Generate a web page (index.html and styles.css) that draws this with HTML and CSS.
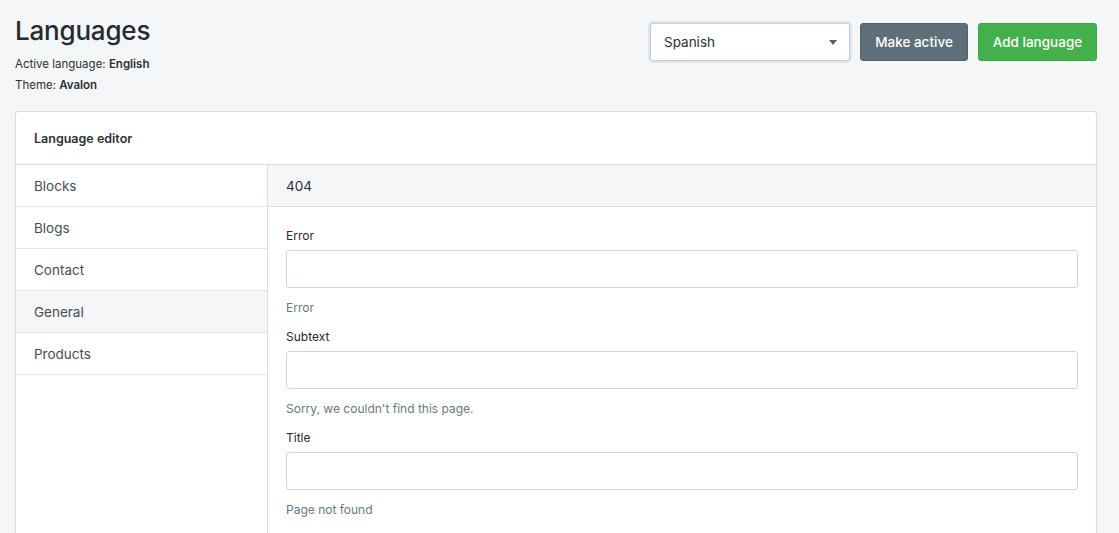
FILE: index.html
```html
<!DOCTYPE html>
<html>
<head>
<meta charset="utf-8">
<link rel="stylesheet" href="styles.css">
</head>
<body>
<div class="page">
  <header class="top">
    <div class="titles">
      <h1>Languages</h1>
      <p class="meta">Active language: <strong>English</strong></p>
      <p class="meta">Theme: <strong>Avalon</strong></p>
    </div>
    <div class="actions">
      <div class="select">
        <span>Spanish</span>
        <svg class="caret" width="8" height="5" viewBox="0 0 8 5"><path d="M0 0h8L4 5z" fill="#5a6068"/></svg>
      </div>
      <button class="btn btn-gray">Make active</button>
      <button class="btn btn-green">Add language</button>
    </div>
  </header>

  <section class="card">
    <div class="card-head">Language editor</div>
    <div class="card-body">
      <nav class="side">
        <div class="side-item">Blocks</div>
        <div class="side-item">Blogs</div>
        <div class="side-item">Contact</div>
        <div class="side-item active">General</div>
        <div class="side-item">Products</div>
      </nav>
      <div class="panel">
        <div class="panel-head">404</div>
        <div class="panel-body">
          <div class="group">
            <label>Error</label>
            <div class="input"></div>
            <div class="help">Error</div>
          </div>
          <div class="group">
            <label>Subtext</label>
            <div class="input"></div>
            <div class="help">Sorry, we couldn't find this page.</div>
          </div>
          <div class="group">
            <label>Title</label>
            <div class="input"></div>
            <div class="help">Page not found</div>
          </div>
        </div>
      </div>
    </div>
  </section>
</div>
</body>
</html>
```

FILE: styles.css
```css
* { box-sizing: border-box; }
html, body {
  margin: 0;
  background: #f5f6f8;
  font-family: Inter, "Open Sans", Arial, sans-serif;
  color: #2c3038;
  overflow: hidden;
}
.page {
  padding: 13px 22px 0 15px;
}
.top {
  display: flex;
  justify-content: space-between;
  align-items: flex-start;
}
.titles h1 {
  margin: 0 0 5px 0;
  font-size: 26px;
  line-height: 36px;
  font-weight: 500;
  letter-spacing: -0.2px;
  color: #262a31;
}
.meta {
  margin: 0;
  font-size: 11.5px;
  line-height: 21px;
  color: #2c3038;
}
.meta strong { font-weight: 600; }
.actions {
  display: flex;
  gap: 10px;
  margin-top: 10px;
}
.select {
  width: 200px;
  height: 38px;
  background: #fff;
  border: 1px solid #c2ccd4;
  border-radius: 3px;
  box-shadow: 0 0 0 2px #dfe5ea;
  display: flex;
  align-items: center;
  justify-content: space-between;
  padding: 0 12px 0 13px;
  font-size: 13.5px;
  color: #2c3038;
}
.caret { margin-top: 1px; }
.btn {
  height: 38px;
  border: 1px solid transparent;
  border-radius: 3px;
  font-family: inherit;
  font-size: 13.5px;
  font-weight: 500;
  color: #fff;
  padding: 0;
  white-space: nowrap;
}
.btn-gray { background: #5e6f7a; border-color: #53636e; width: 108px; }
.btn-green { background: #44b04b; border-color: #3ea645; width: 119px; }
.card {
  margin-top: 15px;
  background: #fff;
  border: 1px solid #d8dee3;
  border-radius: 3px;
}
.card-head {
  height: 53px;
  padding: 0 18px;
  display: flex;
  align-items: center;
  font-size: 12.5px;
  font-weight: 600;
  border-bottom: 1px solid #d8dee3;
}
.card-body {
  display: flex;
  min-height: 400px;
}
.side {
  width: 252px;
  flex: none;
  border-right: 1px solid #d8dee3;
}
.side-item {
  height: 42px;
  padding: 0 18px;
  display: flex;
  align-items: center;
  font-size: 13.5px;
  color: #474d55;
  border-bottom: 1px solid #e4e8ec;
}
.side-item.active { background: #f5f6f8; }
.panel { flex: 1; }
.panel-head {
  height: 42px;
  background: #f5f6f8;
  border-bottom: 1px solid #d8dee3;
  padding: 0 18px;
  display: flex;
  align-items: center;
  font-size: 13.5px;
  color: #2c3038;
}
.panel-body {
  padding: 21px 18px 0 18px;
}
.group { margin-bottom: 13px; }
label {
  display: block;
  font-size: 12px;
  font-weight: 400;
  line-height: 16px;
  margin-bottom: 6px;
  color: #262a31;
}
.input {
  height: 38px;
  border: 1px solid #cfd8de;
  border-radius: 3px;
  background: #fff;
}
.help {
  margin-top: 12px;
  font-size: 12px;
  line-height: 16px;
  color: #6a7883;
}
```
